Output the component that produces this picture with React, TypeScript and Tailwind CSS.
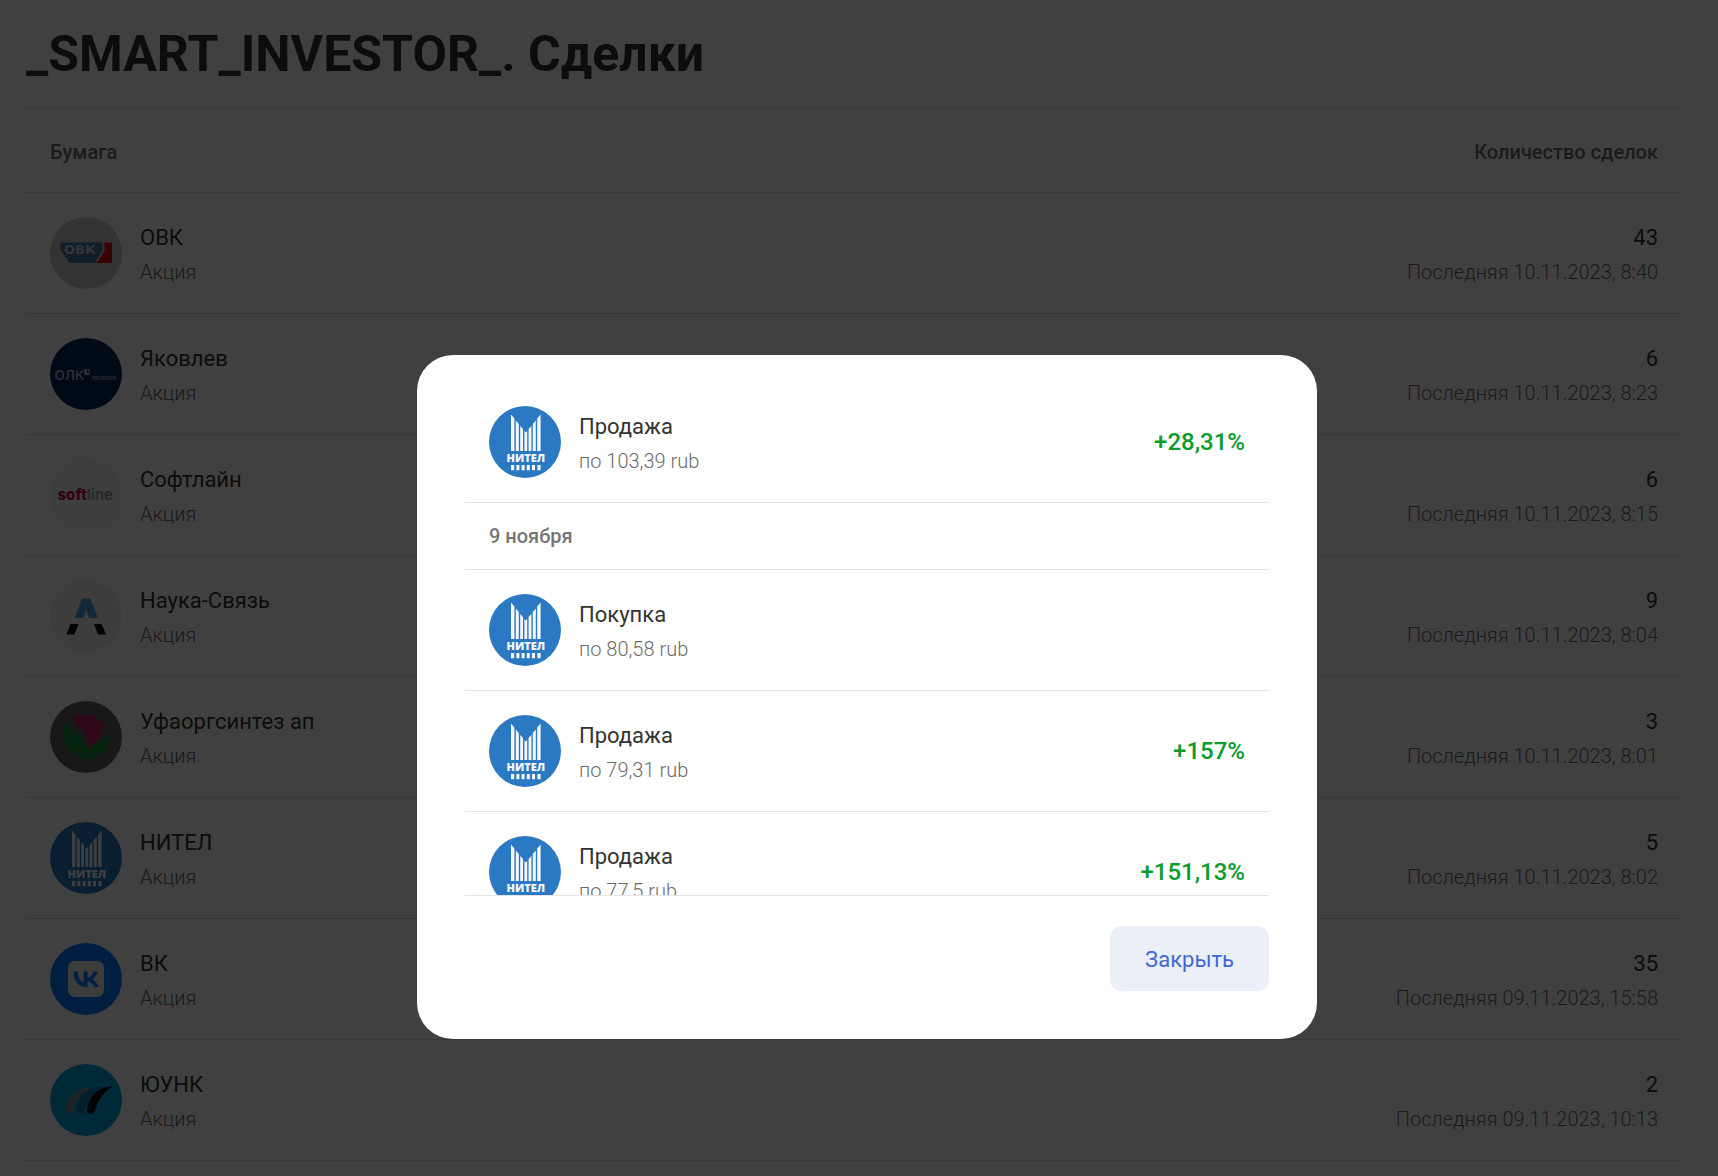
import type { ReactNode } from "react";

type Deal = {
    name: string;
    count: number;
    last: string;
    logo: ReactNode;
};

type Operation = {
    kind: string;
    price: string;
    profit?: string;
};

const OvkLogo = () => (
    <svg viewBox="0 0 72 72" className="size-full">
        <circle cx="36" cy="36" r="36" fill="#c9c9c9" />
        <path d="M10.5 25.5H52.5V33L45 46H19.5L10.5 33Z" fill="#45789c" />
        <path d="M54.5 25.5H62V46H46.5L54.5 34Z" fill="#e30613" />
        <text x="14" y="37" fontFamily="DejaVu Sans" fontWeight="bold" fontSize="13" fill="#c9d8e4">
            ОВК
        </text>
    </svg>
);

const YakovlevLogo = () => (
    <svg viewBox="0 0 72 72" className="size-full">
        <circle cx="36" cy="36" r="36" fill="#00285c" />
        <text x="4.5" y="41.5" fontFamily="Inter" fontWeight="500" fontSize="13.5" fill="#b4bfd0">
            ОЛК
        </text>
        <circle cx="37" cy="34" r="3.2" fill="#b4bfd0" />
        <path d="M37.5 30.8V34.3H40.2" stroke="#00285c" strokeWidth="1" fill="none" />
        <text x="42" y="41.5" fontFamily="Liberation Sans" fontWeight="bold" fontSize="5" fill="#93a2ba">
            ЯКОВЛЕВ
        </text>
    </svg>
);

const SoftlineLogo = () => (
    <svg viewBox="0 0 72 72" className="size-full">
        <circle cx="36" cy="36" r="36" fill="#f3f6fa" />
        <text x="7.5" y="41" fontFamily="Inter" fontWeight="800" fontSize="15" fill="#c8003c">
            soft
            <tspan fontWeight="700" fill="#9a9da3">line</tspan>
        </text>
    </svg>
);

const NaukaLogo = () => (
    <svg viewBox="0 0 72 72" className="size-full">
        <circle cx="36" cy="36" r="36" fill="#f5f1ee" />
        <path d="M32 18.5H40.5L48 38H39L36 29L33.5 38H24.5Z" fill="#45a5dd" />
        <path d="M20.5 44H28.5L24.5 54.5H16.5ZM44 44H51.5L56 54.5H48Z" fill="#111111" />
    </svg>
);

const UfaLogo = () => (
    <svg viewBox="0 0 72 72" className="size-full">
        <circle cx="36" cy="36" r="36" fill="#606060" />
        <path
            d="M14.5 21.5C12 34 15 45 21.5 51.5C28 58.5 41 60.5 49.5 55C56 50.5 59.5 43 59 34C52 39 45 43 38 49.5C36 41 31 35 25 31C20 28 16 26 14.5 21.5Z"
            fill="#0c8a3e"
        />
        <path
            d="M23 17C30 12 43 13 48 18L55 23.5C51.5 27 52 33 49 38L38.5 47.5C38.5 41 38 37 35 32C31 26 24 25 23 17Z"
            fill="#c01f63"
        />
    </svg>
);

const NitelLogo = () => (
    <svg viewBox="0 0 72 72" className="size-full">
        <circle cx="36" cy="36" r="36" fill="#2b78c3" />
        <path
            d="M22 8.5L25.4 12.5V45H22ZM26.8 14.5L29.8 18V45H26.8ZM31.2 20L34 23V45H31.2ZM35.4 25L36.8 26.5L38.2 25V45H35.4ZM39.6 23L42.4 20V45H39.6ZM43.8 18L46.8 14.5V45H43.8ZM48.2 12.5L51.6 8.5V45H48.2Z"
            fill="#f4f8fc"
        />
        <text x="17.5" y="56" fontFamily="Open Sans" fontWeight="800" fontSize="11" fill="#f4f8fc">
            НИТЕЛ
        </text>
        <path
            d="M22 59H25.2V64.3H22ZM27.4 59H30.4V64.3H27.4ZM32.6 59H35.6V64.3H32.6ZM37.8 59H40.8V64.3H37.8ZM43 59H46V64.3H43ZM48.4 59H51.6V64.3H48.4Z"
            fill="#f4f8fc"
        />
    </svg>
);

const VkLogo = () => (
    <svg viewBox="0 0 72 72" className="size-full">
        <circle cx="36" cy="36" r="36" fill="#0077ff" />
        <rect x="18" y="18" width="36" height="36" rx="7" fill="#ededed" />
        <path
            transform="translate(17.2 17.1) scale(.78)"
            d="M25.54 34.58C14.6 34.58 8.36 27.08 8.1 14.6H13.58C13.76 23.76 17.8 27.64 21 28.44V14.6H26.16V22.5C29.32 22.16 32.64 18.56 33.76 14.6H38.92C38.06 19.48 34.46 23.08 31.9 24.56C34.46 25.76 38.56 28.9 40.12 34.58H34.44C33.22 30.78 30.18 27.84 26.16 27.44V34.58H25.54Z"
            fill="#0077ff"
        />
    </svg>
);

const YunkLogo = () => (
    <svg viewBox="0 0 72 72" className="size-full">
        <circle cx="36" cy="36" r="36" fill="#00a3dc" />
        <path d="M42 24C29 22.5 18 30 16 45C16 51 22 51.5 23.5 46C25.5 37 31 28 42 24Z" fill="#7d8c90" />
        <path d="M54 23C40 22 29 29 26.5 45C26.5 51.5 33 52 34.5 46.5C36.5 37 43 28 54 23Z" fill="#1478b8" />
        <path d="M63.5 22C50 23 39 30 37 45C36.5 51.5 43.5 51.5 45.5 46C48 36.5 53 28 63.5 22Z" fill="#111111" />
    </svg>
);

const deals: Deal[] = [
    { name: "ОВК", count: 43, last: "10.11.2023, 8:40", logo: <OvkLogo /> },
    { name: "Яковлев", count: 6, last: "10.11.2023, 8:23", logo: <YakovlevLogo /> },
    { name: "Софтлайн", count: 6, last: "10.11.2023, 8:15", logo: <SoftlineLogo /> },
    { name: "Наука-Связь", count: 9, last: "10.11.2023, 8:04", logo: <NaukaLogo /> },
    { name: "Уфаоргсинтез ап", count: 3, last: "10.11.2023, 8:01", logo: <UfaLogo /> },
    { name: "НИТЕЛ", count: 5, last: "10.11.2023, 8:02", logo: <NitelLogo /> },
    { name: "ВК", count: 35, last: "09.11.2023, 15:58", logo: <VkLogo /> },
    { name: "ЮУНК", count: 2, last: "09.11.2023, 10:13", logo: <YunkLogo /> },
];

const laterOperations: Operation[] = [{ kind: "Продажа", price: "103,39", profit: "+28,31%" }];

const novemberOperations: Operation[] = [
    { kind: "Покупка", price: "80,58" },
    { kind: "Продажа", price: "79,31", profit: "+157%" },
    { kind: "Продажа", price: "77,5", profit: "+151,13%" },
];

function Security({ logo, title, subtitle }: { logo: ReactNode; title: string; subtitle: string }) {
    return (
        <div className="flex items-center gap-[18px]">
            <div className="size-18 shrink-0">{logo}</div>
            <div>
                <p className="text-[22px] leading-[38px] text-[#333333]">{title}</p>
                <p className="text-[20px] leading-[30px] font-light text-[#6b6b6b]">{subtitle}</p>
            </div>
        </div>
    );
}

function OperationRow({ operation }: { operation: Operation }) {
    return (
        <li className="flex items-center justify-between border-b border-[#e4e4e4] p-6">
            <Security
                logo={<NitelLogo />}
                title={operation.kind}
                subtitle={`по ${operation.price} rub`}
            />
            {operation.profit && (
                <span className="text-[24px] leading-[38px] font-medium text-[#0a9c2c]">
                    {operation.profit}
                </span>
            )}
        </li>
    );
}

export default function App() {
    return (
        <div className="h-screen overflow-hidden bg-white font-['Roboto',sans-serif]">

            {/* DEALS */}
            <main className="pt-6 pr-9 pl-[26px]">
                <h1 className="mb-6 text-[50px] leading-15 font-bold text-[#333333]">
                    _SMART_INVESTOR_. Сделки
                </h1>

                <table className="w-full border-separate border-spacing-0 border-t border-[#dcdcdc]">
                    <thead>
                        <tr className="text-[20px] text-[#6b6b6b]">
                            <th className="h-21 border-b border-[#dcdcdc] px-6 pt-0.5 text-left font-medium">
                                Бумага
                            </th>
                            <th className="h-21 border-b border-[#dcdcdc] px-6 pt-0.5 text-right font-medium">
                                Количество сделок
                            </th>
                        </tr>
                    </thead>
                    <tbody>
                        {deals.map((deal) => (
                            <tr key={deal.name}>
                                <td className="border-b border-[#dcdcdc] p-6">
                                    <Security logo={deal.logo} title={deal.name} subtitle="Акция" />
                                </td>
                                <td className="border-b border-[#dcdcdc] px-6 text-right">
                                    <p className="text-[22px] leading-[38px] text-[#333333]">{deal.count}</p>
                                    <p className="text-[20px] leading-[30px] font-light text-[#6b6b6b]">
                                        Последняя {deal.last}
                                    </p>
                                </td>
                            </tr>
                        ))}
                    </tbody>
                </table>
            </main>

            {/* MODAL */}
            <div className="fixed inset-0 flex items-start justify-center bg-black/75 pt-[355px] pl-4">
                <div
                    role="dialog"
                    aria-modal="true"
                    className="w-[900px] rounded-[36px] bg-white px-12 pt-[27px] pb-12"
                >
                    <div className="h-[514px] overflow-y-auto border-b border-[#e4e4e4] [scrollbar-width:none]">
                        <ul>
                            {laterOperations.map((operation) => (
                                <OperationRow key={operation.price} operation={operation} />
                            ))}
                        </ul>
                        <h2 className="flex h-[67px] items-center border-b border-[#e4e4e4] px-6 text-[20px] font-medium text-[#757575]">
                            9 ноября
                        </h2>
                        <ul>
                            {novemberOperations.map((operation) => (
                                <OperationRow key={operation.price} operation={operation} />
                            ))}
                        </ul>
                    </div>

                    <div className="flex justify-end pt-[30px]">
                        <button
                            type="button"
                            className="h-[65px] cursor-pointer rounded-xl bg-[#ebeff7] px-[35px] pt-0.5 text-[22px] text-[#3f68d6]"
                        >
                            Закрыть
                        </button>
                    </div>
                </div>
            </div>
        </div>
    );
}
